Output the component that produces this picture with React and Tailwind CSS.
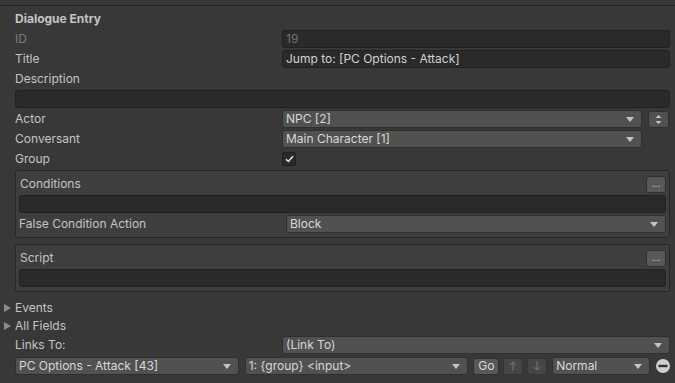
import React from 'react';

// Small pieces of the Unity-style inspector
const Arrow = () => (
  <svg width="8" height="5" viewBox="0 0 8 5" className="shrink-0">
    <path d="M0 0 H8 L4 5 Z" fill="#c4c4c4" />
  </svg>
);

const Dropdown = ({ children, className = '' }) => (
  <div className={`flex items-center h-[18px] pl-[3px] pr-[7px] bg-[#515151] border border-[#2f2f2f] rounded-[3px] text-[#d8d8d8] ${className}`}>
    <span className="flex-1 whitespace-nowrap leading-[16px]">{children}</span>
    <Arrow />
  </div>
);

const Field = ({ children, className = '' }) => (
  <div className={`flex items-center h-[18px] px-[3px] bg-[#2a2a2a] border border-[#212121] rounded-[3px] ${className}`}>
    <span className="whitespace-nowrap leading-[16px]">{children}</span>
  </div>
);

const Row = ({ label, children, labelW = 'w-[267px]', dim }) => (
  <div className="flex items-center h-[18px]">
    <div className={`${labelW} shrink-0 ${dim ? 'text-[#7d7d7d]' : ''}`}>{label}</div>
    <div className="flex-1 flex items-center min-w-0">{children}</div>
  </div>
);

const DotsButton = () => (
  <div className="w-[20px] h-[17px] bg-[#585858] border border-[#2f2f2f] rounded-[3px] flex items-center justify-center text-[#d0d0d0] text-[10px] leading-none pb-[2px]">
    ...
  </div>
);

const Foldout = ({ label }) => (
  <div className="flex items-center h-[18px] -ml-[11px]">
    <svg width="7" height="8" viewBox="0 0 7 8" className="mr-[4px]">
      <path d="M0 0 L7 4 L0 8 Z" fill="#8c8c8c" />
    </svg>
    <span>{label}</span>
  </div>
);

const GroupBox = ({ className = '', children }) => (
  <div className={`bg-[#3e3e3e] border border-[#262626] rounded-[3px] px-[3px] pt-[4px] pb-[4px] flex flex-col gap-[2px] ${className}`}>
    {children}
  </div>
);

export default function App() {
  return (
    <div
      className="w-[675px] h-[383px] overflow-hidden bg-[#383838] text-[#c4c4c4] text-[12px]"
      style={{ fontFamily: 'Inter, "Noto Sans", sans-serif' }}
    >
      <div className="h-[6px] border-b border-[#232323]" />
      <div className="pl-[15px] pr-[5px] pt-[4px] flex flex-col">
        <div className="h-[18px] flex items-center font-bold">Dialogue Entry</div>

        <div className="flex flex-col gap-[2px] mt-[2px]">
          <Row label="ID" dim>
            <Field className="w-full text-[#6f6f6f]">19</Field>
          </Row>
          <Row label="Title">
            <Field className="w-full text-[#d2d2d2]">Jump to: [PC Options - Attack]</Field>
          </Row>
          <Row label="Description" />
          <Field className="w-full" />
          <Row label="Actor">
            <Dropdown className="w-[360px]">NPC [2]</Dropdown>
            <div className="ml-[6px] w-[21px] h-[17px] bg-[#515151] border border-[#2f2f2f] rounded-[3px] flex items-center justify-center">
              <svg width="7" height="9" viewBox="0 0 7 9">
                <path d="M3.5 0 L6.5 3 H0.5 Z M3.5 9 L6.5 6 H0.5 Z" fill="#c4c4c4" />
              </svg>
            </div>
          </Row>
          <Row label="Conversant">
            <Dropdown className="w-[360px]">Main Character [1]</Dropdown>
          </Row>
          <Row label="Group">
            <div className="w-[14px] h-[14px] bg-[#2a2a2a] border border-[#1f1f1f] rounded-[2px] flex items-center justify-center">
              <svg width="9" height="8" viewBox="0 0 9 8">
                <path d="M1 4.2 L3.4 6.5 L8 1.2" stroke="#e6e6e6" strokeWidth="1.5" fill="none" />
              </svg>
            </div>
          </Row>
        </div>

        <GroupBox className="mt-[2px]">
          <div className="flex items-center justify-between h-[18px] pl-[1px]">
            <span>Conditions</span>
            <DotsButton />
          </div>
          <Field className="w-full" />
          <Row label="False Condition Action">
            <Dropdown className="w-full">Block</Dropdown>
          </Row>
        </GroupBox>

        <GroupBox className="mt-[6px]">
          <div className="flex items-center justify-between h-[18px] pl-[1px]">
            <span>Script</span>
            <DotsButton />
          </div>
          <Field className="w-full" />
        </GroupBox>

        <div className="mt-[7px] flex flex-col">
          <Foldout label="Events" />
          <Foldout label="All Fields" />
        </div>

        <div className="mt-[1px]">
          <Row label="Links To:">
            <Dropdown className="w-full">(Link To)</Dropdown>
          </Row>
        </div>

        <div className="mt-[3px] flex items-center h-[18px]">
          <Dropdown className="w-[224px]">PC Options - Attack [43]</Dropdown>
          <Dropdown className="w-[224px] ml-[6px]">1: {'{group}'} &lt;input&gt;</Dropdown>
          <div className="ml-[5px] w-[26px] h-[17px] bg-[#585858] border border-[#2f2f2f] rounded-[3px] flex items-center justify-center text-[#d8d8d8] leading-none">
            Go
          </div>
          <div className="ml-[4px] w-[20px] h-[17px] bg-[#464646] border border-[#343434] rounded-[3px] flex items-center justify-center">
            <svg width="8" height="10" viewBox="0 0 8 10">
              <path d="M4 1 V10 M1 4 L4 1 L7 4" stroke="#7a7a7a" strokeWidth="1" fill="none" />
            </svg>
          </div>
          <div className="ml-[4px] w-[20px] h-[17px] bg-[#464646] border border-[#343434] rounded-[3px] flex items-center justify-center">
            <svg width="8" height="10" viewBox="0 0 8 10">
              <path d="M4 0 V9 M1 6 L4 9 L7 6" stroke="#7a7a7a" strokeWidth="1" fill="none" />
            </svg>
          </div>
          <Dropdown className="w-[98px] ml-[5px]">Normal</Dropdown>
          <svg width="14" height="14" viewBox="0 0 14 14" className="ml-[6px]">
            <circle cx="7" cy="7" r="7" fill="#cfcfcf" />
            <rect x="2.5" y="5.8" width="9" height="2.4" fill="#2e2e2e" />
          </svg>
        </div>
      </div>
    </div>
  );
}
